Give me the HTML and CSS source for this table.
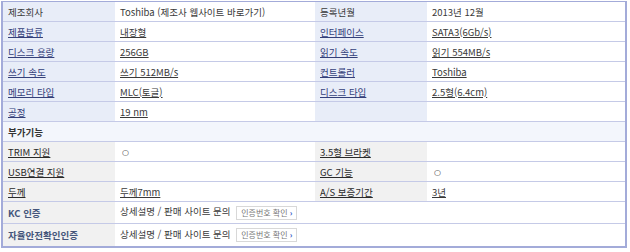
FILE: index.html
```html
<!DOCTYPE html>
<html lang="ko">
<head>
<meta charset="utf-8">
<link rel="stylesheet" href="styles.css">
</head>
<body>
<table class="spec">
  <colgroup>
    <col class="c-lab1"><col class="c-val1"><col class="c-lab2"><col class="c-val2">
  </colgroup>
  <tbody>
    <tr>
      <th class="lab plain">제조회사</th>
      <td class="val">Toshiba (제조사 웹사이트 바로가기)</td>
      <th class="lab plain">등록년월</th>
      <td class="val">2013년 12월</td>
    </tr>
    <tr>
      <th class="lab"><a>제품분류</a></th>
      <td class="val"><a>내장형</a></td>
      <th class="lab"><a>인터페이스</a></th>
      <td class="val"><a>SATA3(6Gb/s)</a></td>
    </tr>
    <tr>
      <th class="lab"><a>디스크 용량</a></th>
      <td class="val"><a>256GB</a></td>
      <th class="lab"><a>읽기 속도</a></th>
      <td class="val"><a>읽기 554MB/s</a></td>
    </tr>
    <tr>
      <th class="lab"><a>쓰기 속도</a></th>
      <td class="val"><a>쓰기 512MB/s</a></td>
      <th class="lab"><a>컨트롤러</a></th>
      <td class="val"><a>Toshiba</a></td>
    </tr>
    <tr>
      <th class="lab"><a>메모리 타입</a></th>
      <td class="val"><a>MLC(토글)</a></td>
      <th class="lab"><a>디스크 타입</a></th>
      <td class="val"><a>2.5형(6.4cm)</a></td>
    </tr>
    <tr>
      <th class="lab"><a>공정</a></th>
      <td class="val"><a>19 nm</a></td>
      <th class="lab"></th>
      <td class="val"></td>
    </tr>
    <tr class="section">
      <th colspan="4">부가기능</th>
    </tr>
    <tr>
      <th class="lab2"><a>TRIM 지원</a></th>
      <td class="val"><span class="mark">○</span></td>
      <th class="lab2"><a>3.5형 브라켓</a></th>
      <td class="val"></td>
    </tr>
    <tr>
      <th class="lab2"><a>USB연결 지원</a></th>
      <td class="val"></td>
      <th class="lab2"><a>GC 기능</a></th>
      <td class="val"><span class="mark">○</span></td>
    </tr>
    <tr>
      <th class="lab2"><a>두께</a></th>
      <td class="val"><a>두께7mm</a></td>
      <th class="lab2"><a>A/S 보증기간</a></th>
      <td class="val"><a>3년</a></td>
    </tr>
    <tr class="cert">
      <th class="lab3">KC 인증</th>
      <td class="val" colspan="3">상세설명 / 판매 사이트 문의 <span class="btn">인증번호 확인 <b>›</b></span></td>
    </tr>
    <tr class="cert last">
      <th class="lab3">자율안전확인인증</th>
      <td class="val" colspan="3">상세설명 / 판매 사이트 문의 <span class="btn">인증번호 확인 <b>›</b></span></td>
    </tr>
  </tbody>
</table>
</body>
</html>
```
FILE: styles.css
```css
html, body {
  margin: 0;
  padding: 0;
  background: #fff;
}
body {
  padding: 1px 0 0 1px;
  font-family: "Noto Sans CJK KR", sans-serif;
  font-size: 9.5px;
  color: #333;
}
.spec {
  width: 626px;
  border-collapse: collapse;
  table-layout: fixed;
  border: 2px solid #a3abd9;
  border-top-width: 1px;
}
.c-lab1 { width: 113px; }
.c-val1 { width: 200px; }
.c-lab2 { width: 112px; }
.c-val2 { width: auto; }
.spec th, .spec td {
  height: 19px;
  padding: 0 0 0 5px;
  border-bottom: 1px solid #c5cae7;
  text-align: left;
  vertical-align: middle;
  font-weight: normal;
  white-space: nowrap;
  line-height: 12px;
}
.spec a {
  color: inherit;
  text-decoration: underline;
}
.lab {
  background: #e8edf8;
  color: #34407a;
}
.lab.plain {
  color: #3a3a3a;
}
.lab2 {
  background: #f1f1f1;
  color: #2a2a2a;
}
.lab3 {
  background: #f1f1f1;
  color: #44557a;
  font-weight: bold !important;
}
.val {
  background: #fff;
  color: #3a3a3a;
}
.section th {
  background: #f3f6fc;
  font-weight: bold;
  color: #333;
  height: 19px;
}
.mark {
  font-family: "DejaVu Sans", sans-serif;
  font-size: 8px;
  padding-left: 2px;
}
.cert th, .cert td {
  height: 21px;
}
.cert.last th, .cert.last td {
  height: 22px;
  border-bottom: none;
}
.btn {
  display: inline-block;
  margin-left: 3px;
  height: 12px;
  padding: 0 4px;
  border: 1px solid #d8d8d8;
  background: #fff;
  color: #777;
  font-size: 8px;
  line-height: 12px;
  vertical-align: middle;
}
.btn b {
  color: #2a56c6;
  font-weight: bold;
}
```
